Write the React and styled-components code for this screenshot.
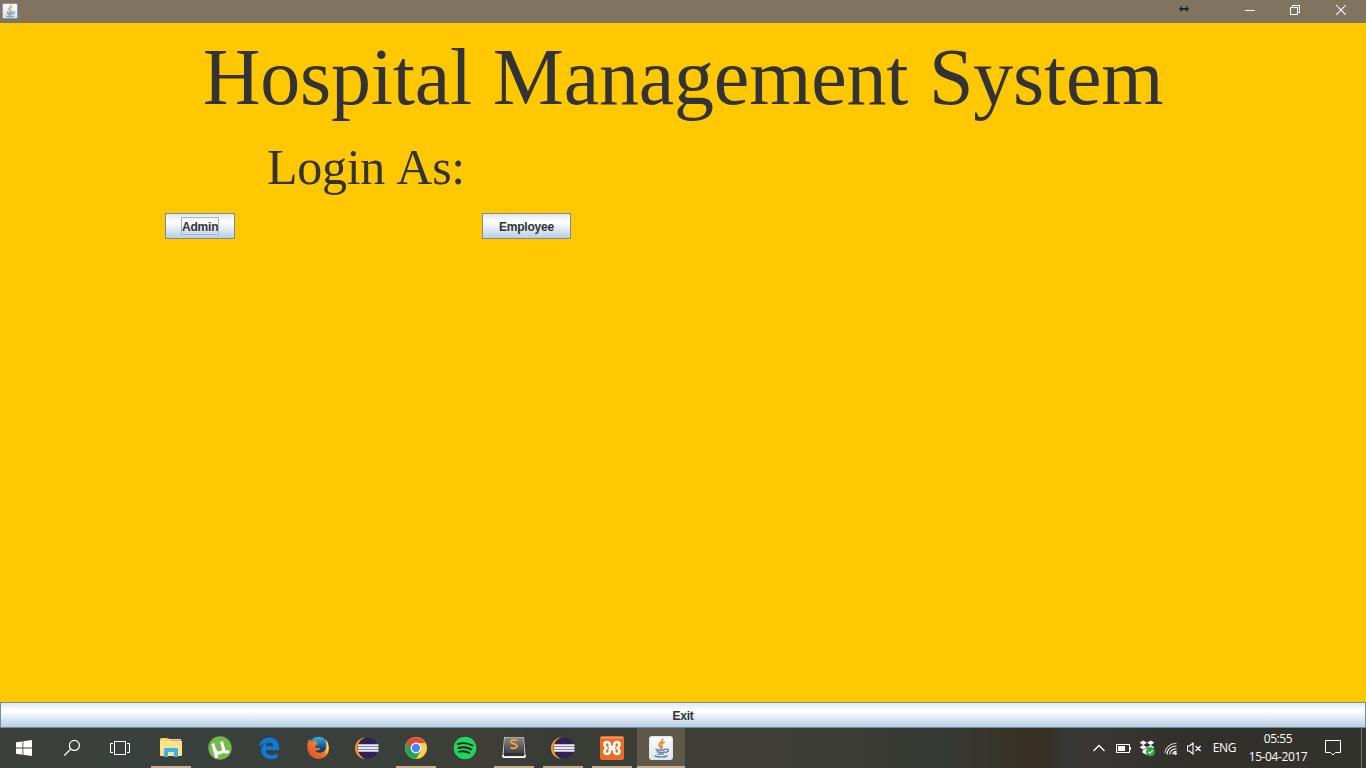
import React from "react";
import styled, { createGlobalStyle, css } from "styled-components";

const GlobalStyle = createGlobalStyle`
  * { box-sizing: border-box; }
  body { margin: 0; overflow: hidden; }
`;

const Desktop = styled.div`
  width: 1366px;
  height: 768px;
  display: flex;
  flex-direction: column;
  overflow: hidden;
`;

const TitleBar = styled.header`
  height: 23px;
  flex: none;
  background: #80735f;
  display: flex;
  justify-content: space-between;
  padding-left: 2px;

  svg { display: block; }
`;

const AppIcon = styled.div`
  padding-top: 3px;
`;

const Controls = styled.div`
  display: flex;
`;

const Control = styled.div`
  width: ${(p) => p.$width || 46}px;
  height: 20px;
  display: flex;
  justify-content: center;
`;

const Window = styled.main`
  flex: 1;
  background: #ffc800;
  display: flex;
  flex-direction: column;
  color: #333333;
`;

const Title = styled.h1`
  margin: 8px 0 0;
  height: 92px;
  font: 400 80px/92px "Liberation Serif", serif;
  letter-spacing: -0.22px;
  word-spacing: 1px;
  text-align: center;
  white-space: nowrap;
`;

const LoginLabel = styled.h2`
  margin: 16px 0 0;
  height: 57px;
  padding-left: 267px;
  font: 400 50px/57px "Liberation Serif", serif;
  letter-spacing: -0.3px;
  word-spacing: 2px;
  white-space: nowrap;
`;

const ButtonRow = styled.div`
  display: flex;
  gap: 247px;
  margin-top: 17px;
  padding-left: 165px;
`;

const MetalButton = styled.button`
  width: ${(p) => p.$width};
  height: 26px;
  padding: 1px 0 0;
  border: 1px solid #7a8a99;
  border-radius: 0;
  display: flex;
  align-items: center;
  justify-content: center;
  background: linear-gradient(#dde8f3 0%, #ffffff 30%, #ffffff 34%, #b8cfe5 100%);
  color: #333333;
  font: 700 12px/14px "Liberation Sans", sans-serif;
`;

const ButtonText = styled.span`
  height: 18px;
  line-height: 19px;
  letter-spacing: -0.2px;
  white-space: nowrap;
  ${(p) =>
    p.$focused &&
    css`
      width: 36px;
      outline: 1px solid #a3b8cc;
      height: 16px;
      line-height: 18px;
      margin-bottom: 1px;
    `}
`;

const ExitSlot = styled.div`
  margin-top: auto;
`;

const Taskbar = styled.footer`
  height: 40px;
  flex: none;
  display: flex;
  background: linear-gradient(90deg, #3c403b 0, #3a403d 120px, #3a3f3c 380px, #3f3e36 480px, #373c36 550px,
    #3f3f35 700px, #3b3c34 850px, #363934 940px, #383226 1020px, #373025 1048px, #363732 1062px, #383733 1085px, #302f2a 1200px, #33332d 1366px);
`;

const SystemButtons = styled.div`
  display: flex;
  margin-right: 3px;
`;

const Slot = styled.div`
  width: 48px;
  height: 40px;
  display: flex;
  align-items: center;
  justify-content: center;
  background: ${(p) => (p.$active ? "#5e584a" : "transparent")};

  svg { display: block; }
`;

const TaskSlot = styled(Slot)`
  background-image: ${(p) => (p.$open || p.$active ? "linear-gradient(#c5ad92, #c5ad92)" : "none")};
  background-size: ${(p) => (p.$active ? "48px" : "40px")} 2px;
  background-position: center bottom;
  background-repeat: no-repeat;
`;

const Tasks = styled.div`
  display: flex;
  gap: 1px;
`;

const Tray = styled.div`
  margin-left: auto;
  display: flex;
  align-items: center;
  color: #ffffff;
  font: 400 12px/18px "Open Sans", sans-serif;

  svg { display: block; }
`;

const TrayIcon = styled.div`
  width: ${(p) => p.$width}px;
  display: flex;
  justify-content: center;
`;

const NoticeSlot = styled(TrayIcon)`
  margin-right: 8px;
`;

const Language = styled.div`
  width: 37px;
  text-align: center;
  padding-bottom: 1px;
  letter-spacing: -0.3px;
`;

const Clock = styled.div`
  width: 70px;
  display: flex;
  flex-direction: column;
  align-items: center;
  white-space: nowrap;
  letter-spacing: -0.4px;
`;

const ShowDesktop = styled.div`
  width: 5px;
  height: 40px;
  border-left: 1px solid #777570;
`;

const JavaIcon = ({ size = 24, border = "#e2e8ea" }) => (
  <svg width={size} height={size} viewBox="0 0 24 24">
    <defs>
      <linearGradient id={"java" + size} x1="0" y1="0" x2="0" y2="1">
        <stop offset="0" stopColor="#ffffff" />
        <stop offset="1" stopColor="#dce5e9" />
      </linearGradient>
    </defs>
    <rect x="0.6" y="0.6" width="22.8" height="22.8" rx="2.4" fill={`url(#java${size})`} stroke={border} strokeWidth="1.2" />
    <g fill="none" strokeLinecap="round">
      <path d="M13.800 3.200c.5 2.500-4.500 3.300-3.800 5.800.2 1 1.700 1.700 1.700 3.200M15.200 6.300c-3.500 1.300-3.200 2.400-2.200 3.800.6.9.1 1.500-.5 2" stroke="#eb7a2c" strokeWidth="1.500" />
      <path d="M7 13.300c2 .9 6 .9 9 0M8 15.700c2.300.8 5 .8 7.300.1M9 17.800c2 .5 4 .5 5.500 0M16.800 13.200c4-.9 3 3.100-.5 3.300M6 19.800c3 1.500 9 1.500 12 0" stroke="#527f9f" strokeWidth="1.300" />
    </g>
  </svg>
);

const ResizeIcon = () => (
  <svg width="12" height="20" viewBox="0 0 12 20">
    <path d="M.8 9 4 6v2.200h4V6l3.200 3L8 12V9.800H4V12z" fill="#272622" />
    <path d="M3 8h6v2H3z" fill="#272622" />
  </svg>
);

const MinimizeIcon = () => (
  <svg width="10" height="20" viewBox="0 0 10 20" shapeRendering="crispEdges">
    <path d="M0 10h10v1H0z" fill="#fff" />
  </svg>
);

const RestoreIcon = () => (
  <svg width="10" height="20" viewBox="0 0 10 20" fill="none" stroke="#fff" shapeRendering="crispEdges">
    <path d="M.5 7.500h7v7h-7zM2.500 7V5.500h7v7H8" />
  </svg>
);

const CloseIcon = () => (
  <svg width="10" height="20" viewBox="0 0 10 20" stroke="#fff" strokeWidth="1.1">
    <path d="M.2 5.200l9.600 9.600M9.800 5.200.2 14.800" />
  </svg>
);

const StartIcon = () => (
  <svg width="16" height="16" viewBox="0 0 16 16" fill="#fff">
    <path d="M0 2.300 6.500 1.400v6.200H0zM7.300 1.200 16 0v7.600H7.300zM0 8.400h6.500v6.300L0 13.800zM7.300 8.400H16V16l-8.700-1.200z" />
  </svg>
);

const SearchIcon = () => (
  <svg width="18" height="18" viewBox="0 0 18 18" fill="none" stroke="#fff" strokeWidth="1.250">
    <circle cx="11.400" cy="6.400" r="5" />
    <path d="M7.800 10 1.300 16.500" />
  </svg>
);

const TaskViewIcon = () => (
  <svg width="20" height="16" viewBox="0 0 20 16" fill="none" stroke="#fff" shapeRendering="crispEdges">
    <path d="M4.500 1.500h11v13h-11zM3 3.500H.5v9H3M17 3.500h2.500v9H17" />
  </svg>
);

const ExplorerIcon = () => (
  <svg width="22" height="20" viewBox="0 0 22 20">
    <path d="M0 2Q0 1 1 1h9.500v1.500H21q1 0 1 1V17q0 1-1 1H1q-1 0-1-1z" fill="#ffe38c" />
    <path d="M.5 0H8q1.500 0 1.700 2.500H.5z" fill="#f5c73d" />
    <path d="M10 1h11v1.500H10z" fill="#e8d18b" />
    <path d="M2 1h3v1H2z" fill="#fff7d3" />
    <path d="M4 11q0-1 1-1h12q1 0 1 1v8h-4v-5H8v5H4z" fill="#36b6ea" />
  </svg>
);

const TorrentIcon = () => (
  <svg width="24" height="24" viewBox="0 0 24 24">
    <circle cx="12" cy="12" r="11.700" fill="#75b84b" />
    <g fill="none" stroke="#fff" strokeWidth="3">
      <path d="M4.800 7.500 8.800 22" />
      <path d="M6.500 13c1 3.400 3.200 4.500 5.800 3.800 2.800-.8 3.700-2.700 3-5" />
      <path d="M13.500 5.500l2.300 8.500c.7 2.500 3 2.800 5.200 1" />
    </g>
  </svg>
);

const EdgeIcon = () => (
  <svg width="22" height="22" viewBox="0 0 22 22" fill="#0c7bdc">
    <path d="M1 9.700C1.800 3.900 5.800.4 11 .4c6.400 0 10 4.400 10 10.300v2.400H7.500c.3 5.500 7.500 6.300 12.200 3.200v4.400c-7.400 3.300-16.500.6-16.500-7.600 0-3.500 2-6.300 5-7.700C5.600 5.800 2.900 7.400 1 9.700zM7.700 9.300h7.500C15 3.700 8.200 4.500 7.700 9.300z" />
  </svg>
);

const FirefoxIcon = () => (
  <svg width="24" height="24" viewBox="0 0 24 24">
    <defs>
      <linearGradient id="fox" x1="0" y1="1" x2="1" y2="0">
        <stop offset="0" stopColor="#d84720" />
        <stop offset=".5" stopColor="#ed7627" />
        <stop offset="1" stopColor="#ffd54b" />
      </linearGradient>
      <linearGradient id="globe" x1="0" y1="0" x2="0" y2="1">
        <stop offset="0" stopColor="#38b4e5" />
        <stop offset=".6" stopColor="#153e79" />
      </linearGradient>
    </defs>
    <circle cx="12.500" cy="11" r="10.300" fill="url(#globe)" />
    <path d="M2.500 4.500C.5 9 .7 16 5 20c4.700 4.200 12.300 3.800 16-1.200C24 15 23.500 8 20 4c.8 3.300.7 6.200-.3 8.700-1.300 4.500-8 5.500-10.800 1.800 2.300.4 4.500-.2 5.500-2-2.400-1-4.200.2-5.500-1.500 0-1.700 1.700-2 3-3.500-1.700-.6-2.400-1.300-1.900-3-2 .2-3 .8-3.800 1.400C5 5.600 4 5.200 3.800 3.300z" fill="url(#fox)" />
    <path d="M20 4c3.500 5 2.800 11.500-.3 14.600 1.500-5 .8-10 .3-14.600" fill="#ffd34b" />
  </svg>
);

const EclipseIcon = () => (
  <svg width="24" height="24" viewBox="0 0 24 24">
    <path d="M10 1.200C3.600 2.300 0 7 0 12.200s3.600 9.900 10 10.700C5.700 20.500 3.300 17 3.300 12S5.700 3.500 10 1.200z" fill="#f7941e" />
    <circle cx="13" cy="12" r="10.500" fill="#2c2255" />
    <path d="M3 8.200h20.500v1.900H3zM3 11.100h20.500V13H3zM3 14h20.500v1.800H3z" fill="#eeeaf4" />
    <path d="M3 10.100h20.500v1H3zM3 13h20.500v1H3z" fill="#8e80ae" />
  </svg>
);

const ChromeIcon = () => (
  <svg width="22" height="22" viewBox="0 0 22 22">
    <circle cx="11" cy="11" r="11" fill="#fbcf47" />
    <path d="M11 11 1.500 5.500A11 11 0 0 0 11 22l4.800-8.200z" fill="#28a35b" />
    <path d="M1.500 5.500A11 11 0 0 1 20.500 6H11L6.700 13.500z" fill="#de4b3d" />
    <circle cx="11" cy="11" r="5.400" fill="#fff" />
    <circle cx="11" cy="11" r="4.200" fill="#4688f1" />
  </svg>
);

const SpotifyIcon = () => (
  <svg width="24" height="24" viewBox="0 0 24 24">
    <circle cx="12" cy="12" r="11.300" fill="#1ed760" />
    <path d="M4.800 8c5-1.500 10.200-1 14.700 1.500M5.500 12c4.500-1.300 8.700-.8 12.500 1.400M6.200 15.700c3.800-1 7.200-.6 10.300 1.300" fill="none" stroke="#171e19" strokeWidth="1.900" strokeLinecap="round" />
  </svg>
);

const SublimeIcon = () => (
  <svg width="24" height="24" viewBox="0 0 24 24">
    <defs>
      <linearGradient id="keycap" x1="0" y1="0" x2="0" y2="1">
        <stop offset="0" stopColor="#858585" />
        <stop offset="1" stopColor="#444444" />
      </linearGradient>
    </defs>
    <path d="M2.500 1.500 1 20q0 1 1.200 1h19.600q1.200 0 1.200-1L21.500 1.500z" fill="#303132" stroke="#d3d3d2" />
    <path d="M1 19v1.200q0 1 1.500 1h19q1.500 0 1.500-1V19" fill="none" stroke="#fff" strokeWidth="1.700" />
    <rect x="2.700" y="1.500" width="18.600" height="15.500" rx="1.200" fill="url(#keycap)" />
    <path d="M15.300 4.500c-2.500-1-6.200-.8-6.200 1.300 0 2.800 5.900 1.400 5.900 4.300 0 2.400-4 2.600-6.500 1.500" fill="none" stroke="#f5a143" strokeWidth="1.900" />
  </svg>
);

const XamppIcon = () => (
  <svg width="24" height="24" viewBox="0 0 24 24">
    <rect width="24" height="24" rx="2" fill="#ec6c24" />
    <path d="M1 1h22v1.500H1z" fill="#f49a66" />
    <g fill="none" stroke="#fff" strokeWidth="2.600" strokeLinejoin="round" strokeLinecap="round">
      <path d="M9.800 10.500V8.500C9.500 5.200 4.500 5.200 4.500 8.500c0 1.800 1 2.600 2 3.500-1 .9-2 1.700-2 3.500 0 3.300 5 3.300 5.300 0v-2" />
      <path d="M14.200 10.500V8.500c.3-3.300 5.300-3.300 5.300 0 0 1.800-1 2.600-2 3.500 1 .9 2 1.700 2 3.500 0 3.300-5 3.300-5.300 0v-2" />
      <path d="M9.800 10.500q2.200 1.200 4.400 0M9.800 13.500q2.200-1.200 4.400 0" />
    </g>
  </svg>
);

const ChevronIcon = () => (
  <svg width="12" height="8" viewBox="0 0 12 8" fill="none" stroke="#fff" strokeWidth="1.300">
    <path d="M.5 7 6 1.500 11.500 7" />
  </svg>
);

const BatteryIcon = () => (
  <svg width="15" height="10" viewBox="0 0 15 10" shapeRendering="crispEdges">
    <path d="M.5 1.500h13v8H.5z" fill="none" stroke="#fff" />
    <path d="M2 3h7v5H2zM14 4h1v3h-1z" fill="#fff" />
  </svg>
);

const DropboxIcon = () => (
  <svg width="17" height="17" viewBox="0 0 17 17">
    <path d="m4.300.5 3.700 2.200-3.700 2.300L.6 2.700zM11.700.5l3.700 2.200L11.700 5 8 2.700zM4.300 5 8 7.300 4.300 9.500.6 7.300zM11.700 5l3.700 2.300-3.700 2.200L8 7.300zM3.500 10.500l4-2.200 4 2.200v2.200L8 15l-4.500-2.300z" fill="#fff" />
    <circle cx="11.500" cy="11.700" r="4.600" fill="#27a936" />
    <path d="m9.200 11.800 1.700 1.600 3-3.400" fill="none" stroke="#fff" strokeWidth="1.200" />
  </svg>
);

const WifiIcon = () => (
  <svg width="14" height="14" viewBox="0 0 14 14" fill="none" stroke="#fff" strokeWidth="1.100">
    <path d="M.8 12C1.500 6.500 6 2.500 12.500 2.300" opacity=".75" />
    <path d="M3 13.500c0-5 4-8.400 9.500-8.500M5.800 13.500c.2-3.200 2.800-5.500 6.700-5.700M8.700 13.500c.2-1.800 1.600-3 3.800-3.100" />
    <circle cx="11.500" cy="12.600" r="1.400" fill="#fff" stroke="none" />
  </svg>
);

const MutedIcon = () => (
  <svg width="15" height="13" viewBox="0 0 15 13" fill="none" stroke="#fff" strokeWidth="1.100">
    <path d="M.5 4v5h2L6 12V1L2.500 4zM8.600 4l5 5M13.600 4l-5 5" />
  </svg>
);

const NoticeIcon = () => (
  <svg width="16" height="16" viewBox="0 0 16 16" fill="none" stroke="#fff">
    <path d="M.5.500h15v12h-5L8 15l-2.500-2.500h-5z" />
  </svg>
);

const tasks = [
  { name: "Explorer", icon: ExplorerIcon, open: true },
  { name: "Torrent", icon: TorrentIcon },
  { name: "Edge", icon: EdgeIcon },
  { name: "Firefox", icon: FirefoxIcon },
  { name: "Eclipse", icon: EclipseIcon },
  { name: "Chrome", icon: ChromeIcon, open: true },
  { name: "Spotify", icon: SpotifyIcon },
  { name: "Sublime", icon: SublimeIcon, open: true },
  { name: "EclipseWorkspace", icon: EclipseIcon, open: true },
  { name: "Xampp", icon: XamppIcon, open: true },
  { name: "Java", icon: JavaIcon, active: true },
];

export default function App() {
  return (
    <Desktop>
      <GlobalStyle />
      <TitleBar>
        <AppIcon><JavaIcon size={16} border="#6c8faf" /></AppIcon>
        <Controls>
          <Control $width={86}><ResizeIcon /></Control>
          <Control><MinimizeIcon /></Control>
          <Control $width={44}><RestoreIcon /></Control>
          <Control $width={48}><CloseIcon /></Control>
          <Control $width={1} />
        </Controls>
      </TitleBar>
      <Window>
        <Title>Hospital Management System</Title>
        <LoginLabel>Login As:</LoginLabel>
        <ButtonRow>
          <MetalButton $width="70px"><ButtonText $focused>Admin</ButtonText></MetalButton>
          <MetalButton $width="89px"><ButtonText>Employee</ButtonText></MetalButton>
        </ButtonRow>
        <ExitSlot>
          <MetalButton $width="100%"><ButtonText>Exit</ButtonText></MetalButton>
        </ExitSlot>
      </Window>
      <Taskbar>
        <SystemButtons>
          <Slot><StartIcon /></Slot>
          <Slot><SearchIcon /></Slot>
          <Slot><TaskViewIcon /></Slot>
        </SystemButtons>
        <Tasks>
          {tasks.map(({ name, icon: Icon, open, active }) => (
            <TaskSlot key={name} $open={open} $active={active}><Icon /></TaskSlot>
          ))}
        </Tasks>
        <Tray>
          <TrayIcon $width={24}><ChevronIcon /></TrayIcon>
          <TrayIcon $width={25}><BatteryIcon /></TrayIcon>
          <TrayIcon $width={23}><DropboxIcon /></TrayIcon>
          <TrayIcon $width={24}><WifiIcon /></TrayIcon>
          <TrayIcon $width={23}><MutedIcon /></TrayIcon>
          <Language>ENG</Language>
          <Clock><span>05:55</span><span>15-04-2017</span></Clock>
          <NoticeSlot $width={40}><NoticeIcon /></NoticeSlot>
          <ShowDesktop />
        </Tray>
      </Taskbar>
    </Desktop>
  );
}
